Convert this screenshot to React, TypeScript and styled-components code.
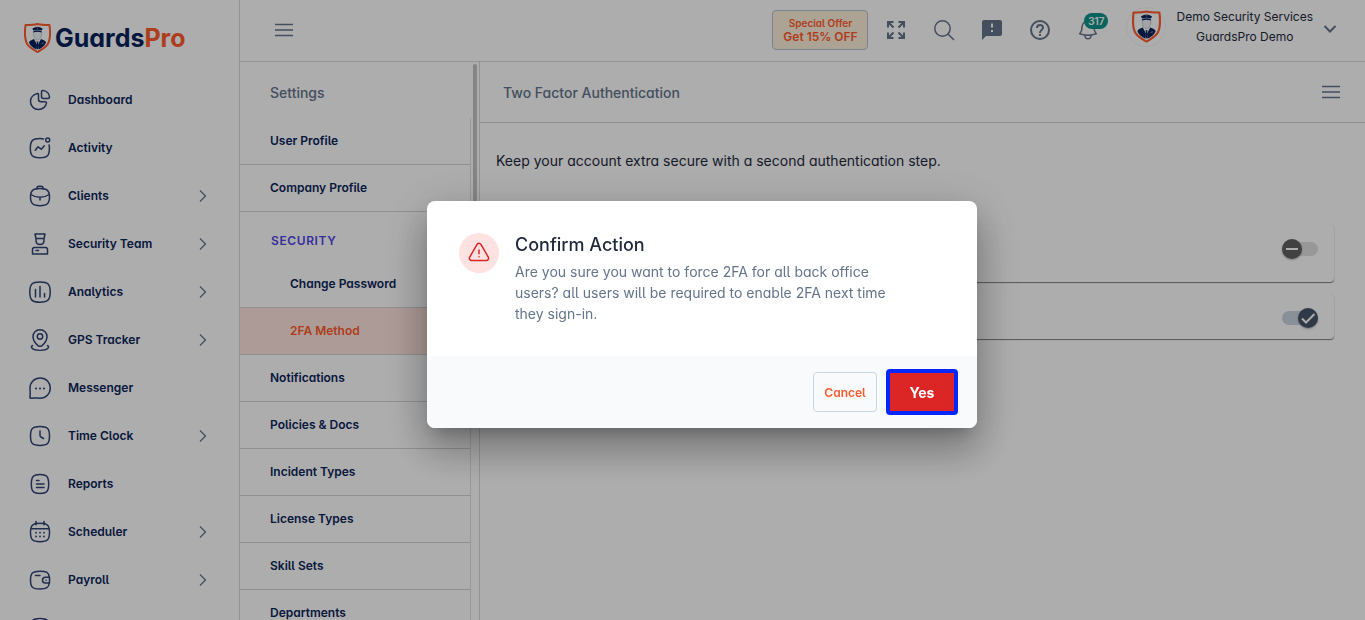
import React from "react";
import styled, { createGlobalStyle, css } from "styled-components";

const color = {
  navy: "#0b2559",
  icon: "#2f4374",
  slate: "#64748b",
  orange: "#ff5a2c",
  line: "#d9dbe0",
  rule: "#d4d4d4",
};

const GlobalStyle = createGlobalStyle`
  *, *::before, *::after { box-sizing: border-box; }
  body {
    margin: 0;
    background: #fff;
    color: #1e293b;
    font-family: Inter, "Open Sans", "Liberation Sans", sans-serif;
    font-feature-settings: "cv11", "cv05";
    font-size: 14px;
    line-height: 20px;
  }
  button { font: inherit; font-feature-settings: inherit; color: inherit; cursor: pointer; }
  a { color: inherit; text-decoration: none; }
  h1, h2, p, ul { margin: 0; padding: 0; }
  ul { list-style: none; }
`;

const Shell = styled.div`
  display: flex;
  height: 100vh;
  overflow: hidden;
`;

const Sidebar = styled.aside`
  flex: 0 0 240px;
  border-right: 1px solid ${color.line};
  overflow: hidden;
`;

const Brand = styled.a`
  display: flex;
  align-items: center;
  gap: 4px;
  padding: 23px 0 23px 24px;
  font-size: 25px;
  line-height: 30px;
  font-weight: 700;
  color: #06235e;
`;

const BrandAccent = styled.span`
  color: ${color.orange};
`;

const NavLink = styled.a`
  display: flex;
  align-items: center;
  gap: 16px;
  height: 48px;
  padding: 0 30px 0 28px;
  font-size: 12px;
  font-weight: 600;
  color: ${color.navy};
`;

const NavLabel = styled.span`
  flex: 1;
`;

const Main = styled.div`
  flex: 1;
  min-width: 0;
  display: flex;
  flex-direction: column;
`;

const TopBar = styled.header`
  flex: none;
  display: flex;
  align-items: center;
  gap: 8px;
  height: 62px;
  padding: 0 28px 2px 24px;
  border-bottom: 1px solid ${color.line};
  color: ${color.slate};
`;

const IconButton = styled.button`
  position: relative;
  display: flex;
  align-items: center;
  justify-content: center;
  width: 40px;
  height: 40px;
  padding: 0;
  border: 0;
  background: none;
`;

const Spacer = styled.div`
  flex: 1;
`;

const Offer = styled.button`
  display: flex;
  flex-direction: column;
  align-items: center;
  justify-content: center;
  width: 96px;
  height: 40px;
  padding: 0;
  border: 1px solid #b4c2d8;
  border-radius: 4px;
  background: #fff0db;
  color: ${color.orange};
  font-size: 12px;
  line-height: 14px;
  font-weight: 600;
  white-space: nowrap;
`;

const OfferTitle = styled.span`
  font-size: 10px;
`;

const Badge = styled.span`
  position: absolute;
  top: 3px;
  right: 0;
  padding: 0 4px;
  border-radius: 8px;
  background: #0d9488;
  color: #fff;
  font-size: 10px;
  line-height: 16px;
  font-weight: 600;
`;

const Account = styled.button`
  display: flex;
  align-items: center;
  gap: 10px;
  margin-left: 10px;
  padding: 0 0 6px;
  border: 0;
  background: none;
  font-size: 12px;
  color: #1e293b;
`;

const Avatar = styled.span`
  display: flex;
  align-items: center;
  justify-content: center;
  width: 40px;
  height: 40px;
  border: 1px solid #f6f6f6;
  border-radius: 50%;
`;

const AccountText = styled.span`
  display: flex;
  flex-direction: column;
`;

const Columns = styled.div`
  flex: 1;
  min-height: 0;
  display: flex;
`;

const SettingsPanel = styled.section`
  flex: 0 0 240px;
  display: flex;
  border-right: 1px solid ${color.line};
`;

const SettingsBody = styled.div`
  flex: 1;
  overflow: hidden;
`;

const PanelTitle = styled.h2`
  padding: 21px 0 15px 30px;
  font-size: 14px;
  line-height: 20px;
  font-weight: 500;
  color: ${color.slate};
`;

const SettingsList = styled.ul`
  border-right: 1px solid #e2e2e2;
`;

const GroupTitle = styled.li`
  padding: 19px 0 10px 31px;
  font-size: 12px;
  font-weight: 600;
  letter-spacing: 0.05em;
  color: #4f46e5;
`;

const SettingsLink = styled.a<{ $nested?: boolean; $active?: boolean }>`
  display: flex;
  align-items: center;
  height: 47px;
  padding-left: ${(p) => (p.$nested ? 50 : 30)}px;
  border-bottom: 1px solid ${color.rule};
  font-size: 12px;
  font-weight: 600;
  color: ${color.navy};
  ${(p) =>
    p.$active &&
    css`
      background: #ffe5df;
      color: ${color.orange};
    `}
`;

const ScrollTrack = styled.div`
  width: 8px;
  padding: 2px;
`;

const ScrollThumb = styled.div`
  height: 260px;
  border-radius: 2px;
  background: #c4c4c4;
`;

const Content = styled.main`
  flex: 1;
  min-width: 0;
`;

const ContentHeader = styled.div`
  display: flex;
  align-items: center;
  justify-content: space-between;
  height: 61px;
  padding: 0 14px 0 23px;
  border-bottom: 1px solid ${color.rule};
  color: ${color.slate};
`;

const ContentTitle = styled.h1`
  padding-top: 2px;
  font-size: 14px;
  font-weight: 500;
`;

const ContentBody = styled.div`
  display: flex;
  flex-direction: column;
  gap: 12px;
  padding: 28px 31px 0 16px;
`;

const Intro = styled.p`
  padding-bottom: 42px;
`;

const OptionCard = styled.div<{ $tall?: boolean }>`
  display: flex;
  justify-content: flex-end;
  min-height: ${(p) => (p.$tall ? 57 : 45)}px;
  padding: 14px 16px;
  border-radius: 4px;
  box-shadow: 0 1px 1px rgba(0, 0, 0, 0.5), 0 0 1px rgba(0, 0, 0, 0.12);
`;

const SwitchTrack = styled.label<{ $on?: boolean }>`
  position: relative;
  display: flex;
  align-items: center;
  justify-content: ${(p) => (p.$on ? "flex-end" : "flex-start")};
  width: 36px;
  height: 14px;
  margin-top: 3px;
  border-radius: 7px;
  background: ${(p) => (p.$on ? "#cbd5e1" : "#e0e0e0")};
`;

const SwitchInput = styled.input`
  position: absolute;
  inset: 0;
  width: 100%;
  height: 100%;
  margin: 0;
  opacity: 0;
`;

const SwitchHandle = styled.span<{ $on?: boolean }>`
  display: flex;
  align-items: center;
  justify-content: center;
  width: 20px;
  height: 20px;
  border-radius: 50%;
  background: ${(p) => (p.$on ? "#475569" : "#616161")};
  box-shadow: 0 1px 2px rgba(0, 0, 0, 0.3);
`;

const Backdrop = styled.div`
  position: fixed;
  inset: 0;
  display: flex;
  align-items: center;
  justify-content: center;
  padding: 9px 0 0 39px;
  background: rgba(0, 0, 0, 0.32);
`;

const Dialog = styled.div`
  width: 550px;
  max-width: 90%;
  border-radius: 8px;
  background: #fff;
  overflow: hidden;
  box-shadow: 0 11px 15px -7px rgba(0, 0, 0, 0.2), 0 24px 38px 3px rgba(0, 0, 0, 0.14),
    0 9px 46px 8px rgba(0, 0, 0, 0.12), 0 20px 40px rgba(0, 0, 0, 0.1);
`;

const DialogBody = styled.div`
  display: flex;
  gap: 16px;
  padding: 32px;
`;

const Warning = styled.div`
  flex: none;
  display: flex;
  align-items: center;
  justify-content: center;
  width: 40px;
  height: 40px;
  border-radius: 50%;
  background: #fee2e2;
`;

const DialogText = styled.div`
  max-width: 380px;
`;

const DialogTitle = styled.h2`
  padding-bottom: 4px;
  font-size: 18px;
  line-height: 24px;
  font-weight: 500;
`;

const DialogMessage = styled.p`
  line-height: 21px;
  color: ${color.slate};
`;

const DialogFooter = styled.div`
  display: flex;
  align-items: center;
  justify-content: flex-end;
  gap: 9px;
  padding: 13px 19px;
  background: #f8fafc;
`;

const Button = styled.button<{ $primary?: boolean }>`
  width: 64px;
  height: 40px;
  padding: 2px 0 0;
  border: 1px solid #cbd5e1;
  border-radius: 4px;
  background: none;
  font-size: 12px;
  font-weight: 600;
  color: ${color.orange};
  ${(p) =>
    p.$primary &&
    css`
      width: 72px;
      height: 46px;
      border: 4px solid #0526ff;
      background: #dc2626;
      font-size: 14px;
      font-weight: 700;
      color: #fff;
    `}
`;

function Shield({ width, height }: { width: number; height: number }) {
  return (
    <svg width={width} height={height} viewBox="0 0 54 60" aria-hidden="true">
      <path
        d="M27 2C19 4 11 4 3 4C1 20 1 34 7 43C12 50 20 54 27 58C34 54 42 50 47 43C53 34 53 20 51 4C43 4 35 4 27 2Z"
        fill="#fff"
        stroke={color.orange}
        strokeWidth="4"
        strokeLinejoin="round"
      />
      <path d="M19 17C18 26 22 34 27 34S36 26 35 17Z" fill="#eef1f6" stroke="#9aa7c0" strokeWidth="1" />
      <path d="M17 11Q27 4 37 11Q37 14 35 15Q27 12 19 15Q17 14 17 11Z" fill="#06235e" />
      <path d="M19 16Q27 13 35 16V19Q27 16 19 19Z" fill="#06235e" />
      <path d="M25 9H29L27 12Z" fill={color.orange} />
      <path
        d="M20 32C15 34 11 35 10 39C12 45 18 50 25 53L26 43L20 32ZM34 32C39 34 43 35 44 39C42 45 36 50 29 53L28 43L34 32Z"
        fill="#06235e"
      />
      <path d="M25 37H29L28 41L29 50L27 53L25 50L26 41Z" fill="#06235e" />
      <path d="M35 41L39 40" stroke="#fff" strokeWidth="1" />
    </svg>
  );
}

function NavIcon({ children }: { children: React.ReactNode }) {
  return (
    <svg
      width="24"
      height="24"
      viewBox="0 0 24 24"
      fill="none"
      stroke={color.icon}
      strokeWidth="1.5"
      strokeLinecap="round"
      strokeLinejoin="round"
      aria-hidden="true"
    >
      {children}
    </svg>
  );
}

const squircle = "M12 2.5C19.5 2.5 21.5 4.5 21.5 12S19.5 21.5 12 21.5S2.500 19.500 2.500 12S4.500 2.500 12 2.500Z";

type NavItem = { label: string; icon: React.ReactNode; expandable?: boolean };

const navItems: NavItem[] = [
  {
    label: "Dashboard",
    icon: (
      <>
        <path d="M9.500 5.500C5 6.500 2.500 10 2.500 13.500C2.500 18 6 21.500 10.500 21.500C14.500 21.500 18 18.500 18.500 15C18.600 14 18 13.700 17 13.700H13C11.300 13.700 10.500 13 10.500 11.500V7C10.500 6 10.400 5.300 9.500 5.500Z" />
        <path d="M13.500 4C13.500 3 14 2.400 15 2.500C18.500 2.800 21.300 5.500 21.500 9C21.500 10 21 10.500 20 10.500H15.500C14 10.500 13.500 10 13.500 8.500Z" />
      </>
    ),
  },
  {
    label: "Activity",
    icon: (
      <>
        <path d="M15.500 2.900C14.500 2.700 13.300 2.600 12 2.600C4.500 2.600 2.300 4.800 2.300 12.200S4.500 21.700 12 21.700S21.400 19.500 21.400 12.200C21.400 11 21.300 9.900 21.100 9" />
        <circle cx="19.700" cy="4" r="2" />
        <path d="M7.300 14.300L10 10.800L13.300 13.200L16.300 9.700" />
      </>
    ),
  },
  {
    label: "Clients",
    expandable: true,
    icon: (
      <>
        <path d="M12 4.600C19 4.600 21.500 6.500 21.500 13S19 21.700 12 21.700S2.500 19.500 2.500 13S5 4.600 12 4.600Z" />
        <path d="M8.700 4.600C8.900 2.800 9.500 2.300 11 2.300H13C14.500 2.300 15.100 2.800 15.300 4.600" />
        <path d="M2.800 10.500C8 14 16 14 21.200 10.500M12 13.200V16" />
      </>
    ),
  },
  {
    label: "Security Team",
    expandable: true,
    icon: (
      <>
        <path d="M7 2H17L16 6.500H8ZM8 6.500V8.500C8 11 9.800 12.500 12 12.500S16 11 16 8.500V6.500" />
        <path d="M6.500 15.500H17.500Q19.500 15.500 19.500 17.500V22H4.500V17.500Q4.500 15.500 6.500 15.500ZM8 18.500H10.500" />
      </>
    ),
  },
  {
    label: "Analytics",
    expandable: true,
    icon: (
      <>
        <path d="M12 2C20 2 22.200 4.200 22.200 12S20 22.200 12 22.200S1.800 20 1.800 12S4 2 12 2Z" />
        <path d="M7.500 9.500V17M12 6.500V17M16.500 13.500V17" />
      </>
    ),
  },
  {
    label: "GPS Tracker",
    expandable: true,
    icon: (
      <>
        <path d="M12 1.700C7.800 1.700 5 4.700 5 8.500C5 12 7.500 15.500 10 17.600Q12 19 14 17.600C16.500 15.500 19 12 19 8.500C19 4.700 16.200 1.700 12 1.700Z" />
        <circle cx="12" cy="8.500" r="2.700" />
        <path d="M4.500 17.500C2.500 18.500 3.500 20.500 6 21.500C9 22.500 15 22.500 18 21.500C20.500 20.500 21.500 18.500 19.500 17.500" />
      </>
    ),
  },
  {
    label: "Messenger",
    icon: (
      <>
        <path d="M2 12.500C1.800 6.500 6.300 2 12.300 2S22.300 6.500 22.300 12S18 22.200 12 22.200C9.500 21.500 6 22.200 2.700 22.200Q1.700 22.200 2 21C2.500 18 2.200 15 2 12.500Z" />
        <path d="M8 12.500H8.020M12 12.500H12.020M16 12.500H16.020" strokeWidth="2" />
      </>
    ),
  },
  {
    label: "Time Clock",
    expandable: true,
    icon: (
      <>
        <path d={squircle} />
        <path d="M12 7V11.500Q12 12.500 13 13L15.500 14.500" />
      </>
    ),
  },
  {
    label: "Reports",
    icon: (
      <>
        <path d="M12 2.500C18.500 2.500 20.700 4.500 20.700 12S18.500 21.500 12 21.500S3.300 19.500 3.300 12S5.500 2.500 12 2.500Z" />
        <path d="M8.500 8.500H11M8.500 12H16M8.500 15.500H16" />
      </>
    ),
  },
  {
    label: "Scheduler",
    expandable: true,
    icon: (
      <>
        <path d="M12 3.300C19.500 3.300 21.500 5.300 21.500 12.500S19.500 21.700 12 21.700S2.500 19.700 2.500 12.500S4.500 3.300 12 3.300ZM3 8.700H21M8 1.500V4.700M16 1.500V4.700" />
        <path
          d="M8 12.700H8.020M12 12.700H12.020M16 12.700H16.020M8 16.500H8.020M12 16.500H12.020M16 16.500H16.020"
          strokeWidth="1.800"
        />
      </>
    ),
  },
  {
    label: "Payroll",
    expandable: true,
    icon: (
      <>
        <path d="M21.300 9.300C20.800 4.500 18.500 3.200 12 3.200C4.500 3.200 2.500 5.200 2.500 12.200S4.500 21 12 21C18.500 21 20.800 19.500 21.300 15" />
        <path d="M21.500 9.300H17.500C15.500 9.300 14.500 10.500 14.500 12.200S15.500 15 17.500 15H21.500V9.300ZM18 12.200H18.020M7.500 7.500H12" />
      </>
    ),
  },
];

const settingsBefore = ["User Profile", "Company Profile"];
const settingsAfter = [
  "Notifications",
  "Policies & Docs",
  "Incident Types",
  "License Types",
  "Skill Sets",
  "Departments",
];

function Menu() {
  return (
    <svg width="20" height="20" viewBox="0 0 20 20" stroke={color.slate} strokeWidth="1.600" aria-hidden="true">
      <path d="M1 4.500H19M1 10H19M1 15.500H19" />
    </svg>
  );
}

function Switch({ on, label }: { on?: boolean; label: string }) {
  return (
    <SwitchTrack $on={on}>
      <SwitchInput type="checkbox" role="switch" aria-label={label} defaultChecked={on} />
      <SwitchHandle $on={on}>
        <svg width="16" height="16" viewBox="0 0 16 16" fill="none" stroke="#fff" strokeWidth="2" aria-hidden="true">
          <path d={on ? "M2 8.500L6 12.500L14.500 4" : "M2 8H14"} />
        </svg>
      </SwitchHandle>
    </SwitchTrack>
  );
}

export default function App() {
  return (
    <>
      <GlobalStyle />
      <Shell>
        <Sidebar>
          <Brand href="#">
            <Shield width={27} height={30} />
            <span>
              Guards<BrandAccent>Pro</BrandAccent>
            </span>
          </Brand>
          <nav>
            {navItems.map((item) => (
              <NavLink href="#" key={item.label}>
                <NavIcon>{item.icon}</NavIcon>
                <NavLabel>{item.label}</NavLabel>
                {item.expandable && (
                  <svg width="12" height="14" viewBox="0 0 12 14" fill="none" stroke={color.slate} strokeWidth="1.300" aria-hidden="true">
                    <path d="M3 1.500L8.500 7L3 12.500" />
                  </svg>
                )}
              </NavLink>
            ))}
            <NavLink href="#" aria-label="More">
              <NavIcon>
                <path d={squircle} />
              </NavIcon>
            </NavLink>
          </nav>
        </Sidebar>

        <Main>
          <TopBar>
            <IconButton aria-label="Toggle navigation">
              <Menu />
            </IconButton>
            <Spacer />
            <Offer>
              <OfferTitle>Special Offer</OfferTitle>
              <span>Get 15% OFF</span>
            </Offer>
            <IconButton aria-label="Full screen">
              <svg width="20" height="20" viewBox="0 0 20 20" fill="none" stroke={color.slate} strokeWidth="2" aria-hidden="true">
                <path d="M2 7.500V2H7.500M2 2L7.500 7.500M12.500 2H18V7.500M18 2L12.500 7.500M2 12.500V18H7.500M2 18L7.500 12.500M18 12.500V18H12.500M18 18L12.500 12.500" />
              </svg>
            </IconButton>
            <IconButton aria-label="Search">
              <svg width="24" height="24" viewBox="0 0 24 24" fill="none" stroke={color.slate} strokeWidth="1.500" strokeLinecap="round" aria-hidden="true">
                <circle cx="10.500" cy="10.500" r="7.700" />
                <path d="M16 16L21.500 21.500" />
              </svg>
            </IconButton>
            <IconButton aria-label="Feedback">
              <svg width="24" height="24" viewBox="0 0 24 24" fill={color.slate} aria-hidden="true">
                <path d="M4 2H20Q22 2 22 4V16Q22 18 20 18H6L2 22V4Q2 2 4 2ZM11 5.500V9.500H13V5.500ZM11 12V14H13V12Z" fillRule="evenodd" />
              </svg>
            </IconButton>
            <IconButton aria-label="Help">
              <svg width="24" height="24" viewBox="0 0 24 24" fill="none" stroke={color.slate} strokeWidth="2" aria-hidden="true">
                <circle cx="12" cy="12" r="9" />
                <path d="M9 10C9 8 10.300 7 12 7S15 8 15 9.800C15 11.800 12 12 12 15M12 16V18" />
              </svg>
            </IconButton>
            <IconButton aria-label="Notifications, 317 unread">
              <svg width="24" height="24" viewBox="0 0 24 24" fill="none" stroke={color.slate} strokeWidth="1.500" strokeLinejoin="round" aria-hidden="true">
                <path d="M14.900 17.100C16.800 16.900 18.600 16.400 20.300 15.800C18.900 14.200 18 12.100 18 9.800V9A6 6 0 0 0 6 9V9.800C6 12.100 5.100 14.200 3.700 15.800C5.400 16.400 7.200 16.900 9.100 17.100M14.900 17.100C13 17.300 11 17.300 9.100 17.100M14.900 17.100A3 3 0 1 1 9.100 17.100" />
              </svg>
              <Badge>317</Badge>
            </IconButton>
            <Account>
              <Avatar>
                <Shield width={29} height={33} />
              </Avatar>
              <AccountText>
                <span>Demo Security Services</span>
                <span>GuardsPro Demo</span>
              </AccountText>
              <svg width="14" height="14" viewBox="0 0 14 14" fill="none" stroke={color.slate} strokeWidth="2" aria-hidden="true">
                <path d="M1.500 6L7 11.500L12.500 6" />
              </svg>
            </Account>
          </TopBar>

          <Columns>
            <SettingsPanel>
              <SettingsBody>
                <PanelTitle>Settings</PanelTitle>
                <SettingsList>
                  {settingsBefore.map((label) => (
                    <li key={label}>
                      <SettingsLink href="#">{label}</SettingsLink>
                    </li>
                  ))}
                  <GroupTitle>SECURITY</GroupTitle>
                  <li>
                    <SettingsLink href="#" $nested>
                      Change Password
                    </SettingsLink>
                  </li>
                  <li>
                    <SettingsLink href="#" $nested $active>
                      2FA Method
                    </SettingsLink>
                  </li>
                  {settingsAfter.map((label) => (
                    <li key={label}>
                      <SettingsLink href="#">{label}</SettingsLink>
                    </li>
                  ))}
                </SettingsList>
              </SettingsBody>
              <ScrollTrack>
                <ScrollThumb />
              </ScrollTrack>
            </SettingsPanel>

            <Content>
              <ContentHeader>
                <ContentTitle>Two Factor Authentication</ContentTitle>
                <IconButton aria-label="Page menu">
                  <Menu />
                </IconButton>
              </ContentHeader>
              <ContentBody>
                <Intro>Keep your account extra secure with a second authentication step.</Intro>
                <OptionCard $tall>
                  <Switch label="Force 2FA for all back office users" />
                </OptionCard>
                <OptionCard>
                  <Switch on label="Two factor authentication" />
                </OptionCard>
              </ContentBody>
            </Content>
          </Columns>
        </Main>
      </Shell>

      <Backdrop>
        <Dialog role="dialog" aria-modal="true" aria-labelledby="confirm-title">
          <DialogBody>
            <Warning>
              <svg width="24" height="24" viewBox="0 0 24 24" fill="none" stroke="#dc2626" strokeWidth="1.500" strokeLinecap="round" strokeLinejoin="round" aria-hidden="true">
                <path d="M12 9V12.750M2.700 16.130C1.830 17.630 2.910 19.500 4.640 19.500H19.360C21.090 19.500 22.170 17.630 21.300 16.130L13.950 3.380C13.080 1.880 10.920 1.880 10.050 3.380L2.700 16.130ZM12 15.750H12.010V15.760H12Z" />
              </svg>
            </Warning>
            <DialogText>
              <DialogTitle id="confirm-title">Confirm Action</DialogTitle>
              <DialogMessage>
                Are you sure you want to force 2FA for all back office users? all users will be required to enable 2FA
                next time they sign-in.
              </DialogMessage>
            </DialogText>
          </DialogBody>
          <DialogFooter>
            <Button>Cancel</Button>
            <Button $primary>Yes</Button>
          </DialogFooter>
        </Dialog>
      </Backdrop>
    </>
  );
}
